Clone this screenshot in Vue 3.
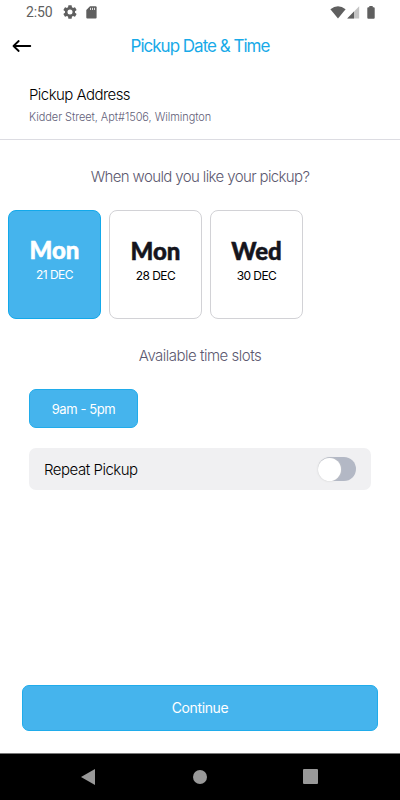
<script setup>
import { ref } from 'vue'

const days = [
  { id: 1, name: 'Mon', date: '21 DEC' },
  { id: 2, name: 'Mon', date: '28 DEC' },
  { id: 3, name: 'Wed', date: '30 DEC' },
]
const selected = ref(1)
const repeat = ref(false)
</script>

<template>
  <div class="screen">
    <div class="status">
      <span class="clock">2:50</span>
      <svg class="gear" width="14" height="14" viewBox="2 2 20 20">
        <path fill="#5f5f5f" d="M19.14 12.94c.04-.3.06-.61.06-.94 0-.32-.02-.64-.07-.94l2.03-1.58a.49.49 0 0 0 .12-.61l-1.92-3.32a.49.49 0 0 0-.59-.22l-2.39.96c-.5-.38-1.03-.7-1.62-.94l-.36-2.54a.48.48 0 0 0-.48-.41h-3.84a.47.47 0 0 0-.47.41l-.36 2.54c-.59.24-1.13.57-1.62.94l-2.39-.96a.47.47 0 0 0-.59.22L2.74 8.87a.47.47 0 0 0 .12.61l2.03 1.58c-.05.3-.09.63-.09.94s.02.64.07.94l-2.03 1.58a.49.49 0 0 0-.12.61l1.92 3.32c.12.22.37.29.59.22l2.39-.96c.5.38 1.03.7 1.62.94l.36 2.54c.05.24.24.41.48.41h3.84c.24 0 .44-.17.47-.41l.36-2.54c.59-.24 1.13-.56 1.62-.94l2.39.96c.22.08.47 0 .59-.22l1.92-3.32a.47.47 0 0 0-.12-.61l-2.01-1.58zM12 15.6A3.6 3.6 0 1 1 12 8.4a3.6 3.6 0 0 1 0 7.2z" />
      </svg>
      <svg class="sd" width="11" height="13" viewBox="0 0 11 13">
        <path fill="#5f5f5f" d="M4 .3h5.6q1 0 1 1v10.2q0 1-1 1H1.3q-1 0-1-1V4z" />
        <path stroke="#fff" stroke-width=".8" d="M4.500 1.800v2.200M6.500 1.800v2.200M8.500 1.800v2.200" />
      </svg>
      <span class="grow"></span>
      <svg width="16" height="13" viewBox="0 0 16 13">
        <path fill="#5f5f5f" d="M.4 3.2Q8-2.7 15.6 3.2L8 12.6z" />
      </svg>
      <svg class="signal" width="13" height="13" viewBox="0 0 13 13">
        <path fill="#c4c4c4" d="M12.2.3v12.2H.2z" />
        <path fill="#5f5f5f" d="M7 5.6v6.9H.2z" />
      </svg>
      <svg class="battery" width="8" height="13" viewBox="0 0 8 13">
        <path fill="#5f5f5f" d="M2.3 0h3.4v1.2h1q1 0 1 1v9.6q0 1-1 1H1.3q-1 0-1-1V2.200q0-1 1-1h1z" />
      </svg>
    </div>

    <header class="header">
      <button class="back" aria-label="Back">
        <svg width="20" height="14" viewBox="0 0 20 14" fill="none" stroke="#000" stroke-width="1.8" stroke-linecap="round" stroke-linejoin="round">
          <path d="M18.300 7H1.500M6.700 2L1.500 7l5.200 5" />
        </svg>
      </button>
      <h1 class="title">Pickup Date &amp; Time</h1>
    </header>

    <section class="address">
      <div class="address-title">Pickup Address</div>
      <div class="address-text">Kidder Street, Apt#1506, Wilmington</div>
    </section>

    <h2 class="prompt question"><span>When would you like your pickup?</span></h2>

    <div class="days">
      <button v-for="d in days" :key="d.id" class="day" :class="{ active: d.id === selected }" @click="selected = d.id">
        <span class="day-name">{{ d.name }}</span>
        <span class="day-date">{{ d.date }}</span>
      </button>
    </div>

    <h2 class="prompt slots-title"><span>Available time slots</span></h2>

    <button class="slot"><span>9am - 5pm</span></button>

    <div class="repeat">
      <span class="repeat-label">Repeat Pickup</span>
      <button class="toggle" :class="{ on: repeat }" aria-label="Repeat Pickup" @click="repeat = !repeat">
        <span class="knob"></span>
      </button>
    </div>

    <button class="continue"><span>Continue</span></button>

    <nav class="nav">
      <svg width="14" height="16" viewBox="0 0 14 16"><path fill="#999" d="M14 0v16L0 8z" /></svg>
      <svg width="14" height="14" viewBox="0 0 14 14"><circle cx="7" cy="7" r="7" fill="#999" /></svg>
      <svg width="15" height="15" viewBox="0 0 15 15"><rect width="15" height="15" rx="1" fill="#999" /></svg>
    </nav>
  </div>
</template>

<style>
body {
  margin: 0;
  background: #fff;
}
</style>

<style scoped>
.screen {
  display: flex;
  flex-direction: column;
  box-sizing: border-box;
  width: 400px;
  height: 800px;
  overflow: hidden;
  background: #fff;
  font-family: Inter, sans-serif;
  font-weight: 300;
  color: #000;
}
svg {
  display: block;
  flex: none;
}
button {
  font: inherit;
  color: inherit;
  border: 0;
  padding: 0;
  background: none;
  box-sizing: border-box;
}
h1,
h2 {
  margin: 0;
  white-space: nowrap;
}
.status {
  display: flex;
  align-items: center;
  height: 24px;
  padding: 0 25px 0 26px;
}
.clock {
  font: 400 14px/24px Roboto, sans-serif;
  color: #5f5f5f;
  letter-spacing: -0.15px;
  width: 37px;
}
.sd {
  margin-left: 9px;
}
.grow {
  flex: 1;
}
.signal {
  margin-left: 1px;
}
.battery {
  margin-left: 7px;
}
.header {
  display: grid;
  grid-template-columns: 40px 1fr 40px;
  align-items: center;
  height: 44px;
}
.back {
  padding-left: 12px;
}
.title {
  text-align: center;
  font-size: 17px;
  font-weight: 400;
  letter-spacing: -1px;
  color: #18aae8;
}
.address {
  box-sizing: border-box;
  height: 72px;
  padding: 16px 29px 0;
  border-bottom: 1px solid #dcdce2;
}
.address-title {
  font-size: 15px;
  line-height: 21px;
  letter-spacing: -0.55px;
}
.address-text {
  margin-top: 4px;
  font-size: 11px;
  line-height: 17px;
  letter-spacing: -0.06px;
  color: #626078;
}
.prompt {
  display: flex;
  align-items: center;
  justify-content: center;
  font-size: 15px;
  font-weight: 300;
  color: #5c5970;
}
.question {
  height: 70px;
  padding-top: 2px;
  box-sizing: border-box;
  letter-spacing: -0.62px;
}
.days {
  display: flex;
  gap: 8px;
  padding-left: 8px;
}
.day {
  display: flex;
  flex-direction: column;
  align-items: center;
  width: 93px;
  height: 109px;
  padding-top: 24px;
  border: 1px solid #d2d2d6;
  border-radius: 8px;
  background: #fff;
}
.day-name {
  font: 900 24px/32px Lato, sans-serif;
  color: #15151d;
  -webkit-text-stroke: 0.5px currentColor;
  stroke-linejoin: round;
}
.day-date {
  margin-top: 1px;
  font-size: 12px;
  line-height: 16px;
  font-weight: 400;
  letter-spacing: -0.55px;
}
.day.active {
  padding-top: 23px;
  background: #45b4ed;
  border-color: #12a9eb;
  color: #fff;
}
.day.active .day-name {
  color: #fff;
}
.slots-title {
  height: 70px;
  padding-top: 2px;
  box-sizing: border-box;
  letter-spacing: -0.5px;
}
.slot {
  width: 109px;
  height: 39px;
  margin-left: 29px;
  border: 1px solid #20aceb;
  border-radius: 7px;
  background: #45b4ed;
  color: #fff;
  font-size: 13px;
  font-weight: 400;
  letter-spacing: -0.4px;
}
.repeat {
  display: flex;
  align-items: center;
  justify-content: space-between;
  box-sizing: border-box;
  height: 42px;
  margin: 20px 29px 0;
  padding: 0 15px;
  border-radius: 7px;
  background: #f0f0f2;
}
.repeat-label {
  font-size: 15px;
  letter-spacing: -0.48px;
}
.toggle {
  display: flex;
  align-items: center;
  width: 38px;
  height: 24px;
  border-radius: 12px;
  background: #b3b8c5;
}
.toggle.on {
  justify-content: flex-end;
  background: #45b4ed;
}
.knob {
  width: 23px;
  height: 23px;
  border-radius: 50%;
  background: #fff;
  box-shadow: 0 0 2px #ccc;
}
.continue {
  height: 46px;
  margin: auto 22px 22px;
  padding-bottom: 2px;
  border: 1px solid #20aceb;
  border-radius: 7px;
  background: #45b4ed;
  color: #fff;
  font-size: 14px;
  font-weight: 400;
  letter-spacing: -0.4px;
}
.nav {
  display: grid;
  grid-template-columns: 112px 110px 15px;
  align-items: center;
  box-sizing: border-box;
  height: 47px;
  padding: 0 82px 1px 81px;
  border-top: 1px solid #777;
  background: #000;
}
</style>
